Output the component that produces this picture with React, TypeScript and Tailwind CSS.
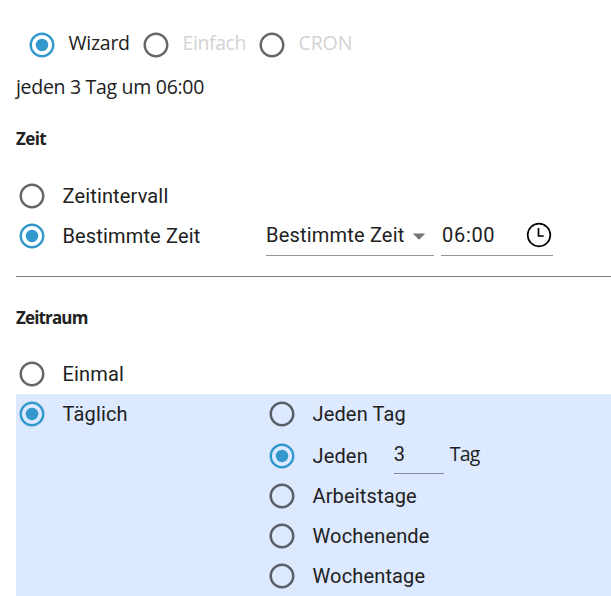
import type { ReactNode } from "react"
import clsx from "clsx"

const segoe = "font-['Open_Sans','Noto_Sans',sans-serif]"

function Radio({ checked }: { checked?: boolean }) {
  return (
    <svg
      viewBox="0 0 24 24"
      className={clsx("size-[30px] shrink-0", checked ? "text-[#3399cc]" : "text-black/60")}
      fill="currentColor"
    >
      <path d="M12 2C6.48 2 2 6.48 2 12s4.48 10 10 10 10-4.48 10-10S17.52 2 12 2zm0 18c-4.42 0-8-3.58-8-8s3.58-8 8-8 8 3.58 8 8-3.58 8-8 8z" />
      {checked && <circle cx="12" cy="12" r="5" />}
    </svg>
  )
}

function Option({ label, checked }: { label: string; checked?: boolean }) {
  return (
    <label className="flex h-10 items-center gap-[15.5px] pl-px">
      <Radio checked={checked} />
      <span className="whitespace-nowrap tracking-[0.15px]">{label}</span>
    </label>
  )
}

function Mode({ children, checked, className }: { children: ReactNode; checked?: boolean; className: string }) {
  return (
    <label className={clsx("flex items-center gap-[11.5px]", className)}>
      <Radio checked={checked} />
      <span className={clsx("relative -top-0.5 whitespace-nowrap", !checked && "text-[#d3d3d3]")}>{children}</span>
    </label>
  )
}

export default function App() {
  return (
    <main className="h-[596px] w-full overflow-hidden bg-white pl-4 font-[Roboto,sans-serif] text-[20px] leading-6 text-[#212121]">
      <div className={clsx("flex h-[60px] pl-[11px] pt-[30px] text-[19.5px]", segoe)}>
        <Mode checked className="w-[114px] tracking-[-0.25px]">Wizard</Mode>
        <Mode className="w-[116px] tracking-[-0.4px]">Einfach</Mode>
        <Mode className="tracking-[-0.1px]">CRON</Mode>
      </div>

      <p className={clsx("h-[66px] pt-[15px] text-[19.5px] tracking-[-0.3px]", segoe)}>jeden 3 Tag um 06:00</p>

      <section className="h-[150px]">
        <h2 className={clsx("h-[50px] pt-px text-[17px] font-bold tracking-[-0.6px]", segoe)}>Zeit</h2>
        <Option label="Zeitintervall" />
        <div className="flex">
          <div className="w-[250px]">
            <Option label="Bestimmte Zeit" checked />
          </div>
          <div className="flex h-10 w-[168px] items-center justify-between border-b border-[#949494] pb-0.5 tracking-[0.19px]">
            <span className="whitespace-nowrap">Bestimmte Zeit</span>
            <svg viewBox="0 0 24 24" className="mt-0.5 size-[30px] shrink-0 text-[#757575]" fill="currentColor">
              <path d="M7 10l5 5 5-5z" />
            </svg>
          </div>
          <div className="ml-[7px] flex h-10 w-28 items-center justify-between border-b border-[#949494] pb-0.5 pl-px">
            <span className="tracking-[0.7px]">06:00</span>
            <svg viewBox="0 0 26 26" className="mr-px size-[26px]" fill="none" stroke="#000" strokeWidth="1.7">
              <circle cx="13" cy="13" r="11.3" />
              <path d="M12.5 6v8h5.2" />
            </svg>
          </div>
        </div>
      </section>

      <hr className="border-[#808080]" />

      <section>
        <h2 className={clsx("h-[77px] pt-[29px] text-[17px] font-bold tracking-[-0.85px]", segoe)}>Zeitraum</h2>
        <Option label="Einmal" />
        <div className="flex bg-[#dde9ff]">
          <div className="w-[250px]">
            <Option label="Täglich" checked />
          </div>
          <div className="h-[202px]">
            <Option label="Jeden Tag" />
            <div className="flex h-[42px] items-end">
              <Option label="Jeden" checked />
              <div className="mb-0.5 ml-[26px] h-[38px] w-[50px] border-b border-[#848b99] pt-1.5">3</div>
              <span className={clsx("mb-2.5 ml-1.5 text-[19.5px] tracking-[-0.8px]", segoe)}>Tag</span>
            </div>
            <Option label="Arbeitstage" />
            <Option label="Wochenende" />
            <Option label="Wochentage" />
          </div>
        </div>
      </section>
    </main>
  )
}
